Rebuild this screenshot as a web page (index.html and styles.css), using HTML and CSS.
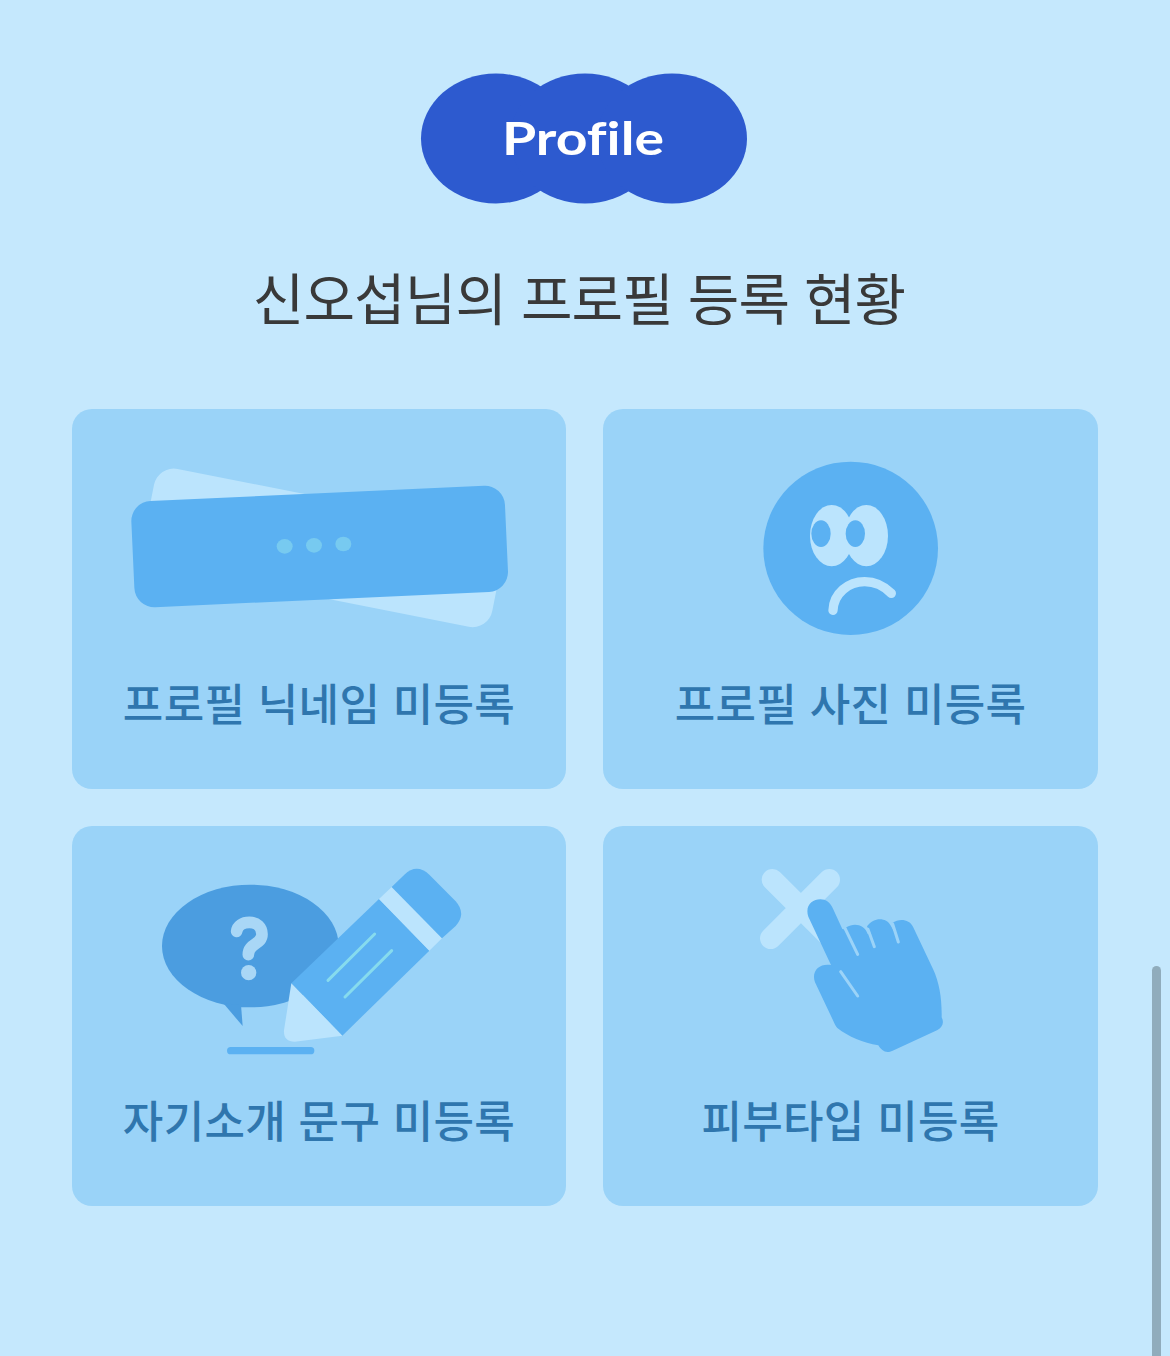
FILE: index.html
```html
<!DOCTYPE html>
<html lang="ko">
<head>
    <meta charset="UTF-8">
    <title>Profile</title>
    <link rel="stylesheet" href="styles.css">
</head>
<body>
    <div class="profile">
        <svg class="profile-badge" width="330" height="132" viewBox="0 0 330 132">
            <g fill="#2d5acf">
                <ellipse cx="76" cy="65.5" rx="75" ry="65"/>
                <ellipse cx="165" cy="65.5" rx="75" ry="65"/>
                <ellipse cx="252" cy="65.5" rx="75" ry="65"/>
            </g>
            <text class="badge-text" x="82" y="82" textLength="162" lengthAdjust="spacingAndGlyphs">Profile</text>
        </svg>
        <h1 class="profile-title">신오섭님의 프로필 등록 현황</h1>

        <div class="card-grid">
            <div class="card">
                <svg class="card-image" width="418" height="210" viewBox="0 -36 1254 630">
                    <rect x="105" y="146" width="1069" height="295" rx="60" fill="#bbe4fd" transform="rotate(11.2 639.5 293.5)"/>
                    <rect x="68" y="130" width="1122" height="319" rx="60" fill="#5bb1f2" transform="rotate(-2.6 629 289.5)"/>
                    <g fill="#77caf0">
                        <ellipse cx="524" cy="289" rx="24" ry="22"/>
                        <ellipse cx="612" cy="286" rx="24" ry="22"/>
                        <ellipse cx="700" cy="282" rx="24" ry="22"/>
                    </g>
                </svg>
                <p class="card-label">프로필 닉네임 미등록</p>
            </div>

            <div class="card">
                <svg class="card-image" width="221" height="210" viewBox="0 -36 663 630">
                    <ellipse cx="332" cy="295" rx="262" ry="260" fill="#5bb1f2"/>
                    <g fill="#bbe4fd">
                        <ellipse cx="275" cy="257" rx="65" ry="92"/>
                        <ellipse cx="379" cy="257" rx="65" ry="92"/>
                    </g>
                    <g fill="#5bb1f2">
                        <ellipse cx="243" cy="251" rx="29" ry="40"/>
                        <ellipse cx="346" cy="251" rx="29" ry="40"/>
                    </g>
                    <path d="M279 481C281 430 325 395 374 395C404 395 431 407 454 430" fill="none" stroke="#bbe4fd" stroke-width="28" stroke-linecap="round"/>
                </svg>
                <p class="card-label">프로필 사진 미등록</p>
            </div>

            <div class="card">
                <svg class="card-image" width="338" height="210" viewBox="0 0 1014 630">
                    <ellipse cx="301" cy="273" rx="265" ry="184" fill="#4b9de0"/>
                    <path d="M220 445L278 513L273 450Z" fill="#4b9de0"/>
                    <path d="M260 229C262 212 278 202 298 202C320 202 336 216 336 238C336 270 295 264 295 299" fill="none" stroke="#a9d7f6" stroke-width="35" stroke-linecap="round" stroke-linejoin="round"/>
                    <circle cx="296" cy="353" r="23" fill="#a9d7f6"/>
                    <path d="M424 385L687 132L838 287L577 542Z" fill="#5bb1f2"/>
                    <path d="M687 132L725 96L876 250L838 287Z" fill="#bbe4fd"/>
                    <path d="M725 96L763 59Q800 24 838 59L917 139Q950 176 917 213L876 250Z" fill="#5bb1f2"/>
                    <path d="M424 385L577 542L434 560Q400 560 402 526Z" fill="#bbe4fd"/>
                    <path d="M534 376L674 237M585 426L725 287" fill="none" stroke="#86dbee" stroke-width="9" stroke-linecap="round"/>
                    <rect x="231" y="576" width="262" height="22" rx="11" fill="#5bb1f2"/>
                </svg>
                <p class="card-label">자기소개 문구 미등록</p>
            </div>

            <div class="card">
                <svg class="card-image" width="221" height="210" viewBox="0 0 663 630">
                    <path d="M97 74L268 244M268 74L92 250" fill="none" stroke="#bbe4fd" stroke-width="64" stroke-linecap="round"/>
                    <path d="M205 185C194 151 217 133 241 133C258 133 270 142 278 159L307 222L319 225V217C341 203 373 207 383 237L394 239L381 214C401 185 439 187 451 210L465 234L457 204C477 189 508 192 519 215L579 342C598 382 606 430 605 487C614 505 606 518 591 526L458 587C438 597 425 587 415 571C369 564 326 545 292 519C288 514 284 507 281 500L225 382C213 348 238 324 273 330Z" fill="#5bb1f2"/>
                    <path d="M302 350L353 423M316 222L353 298M384 223L403 275M458 207L475 261" fill="none" stroke="#9bd3f8" stroke-width="9" stroke-linecap="round"/>
                </svg>
                <p class="card-label">피부타입 미등록</p>
            </div>
        </div>
    </div>
    <div class="scroll-thumb"></div>
</body>
</html>
```
FILE: styles.css
```css
* {
    box-sizing: border-box;
}
body {
    margin: 0;
    height: 1356px;
    overflow: hidden;
    background-color: #c5e8fd;
    font-family: "Noto Sans CJK KR", sans-serif;
}
.profile {
    display: flex;
    flex-direction: column;
    align-items: center;
    padding: 73px 72px 0;
}
.profile-badge {
    display: block;
}
.badge-text {
    font-family: Lato, sans-serif;
    font-size: 46px;
    font-weight: bold;
    font-variant-ligatures: none;
    fill: #fff;
}
.profile-title {
    margin: 51px 12px 0 0;
    font-size: 56px;
    font-weight: 400;
    line-height: 80px;
    letter-spacing: -0.85px;
    color: #393939;
    white-space: nowrap;
}
.card-grid {
    display: grid;
    grid-template-columns: 494px 495px;
    grid-auto-rows: 380px;
    gap: 37px;
    margin-top: 73px;
}
.card {
    display: flex;
    flex-direction: column;
    align-items: center;
    padding-top: 29px;
    border-radius: 20px;
    background-color: #9ad3f8;
}
.card-image {
    display: block;
}
.card-label {
    margin: 22px 0 0;
    font-size: 44px;
    font-weight: 500;
    line-height: 64px;
    letter-spacing: 0.3px;
    color: #2f76ae;
    white-space: nowrap;
}
.scroll-thumb {
    position: absolute;
    top: 966px;
    right: 9px;
    width: 9px;
    height: 390px;
    border-radius: 5px 5px 0 0;
    background-color: #90acbc;
}
```
